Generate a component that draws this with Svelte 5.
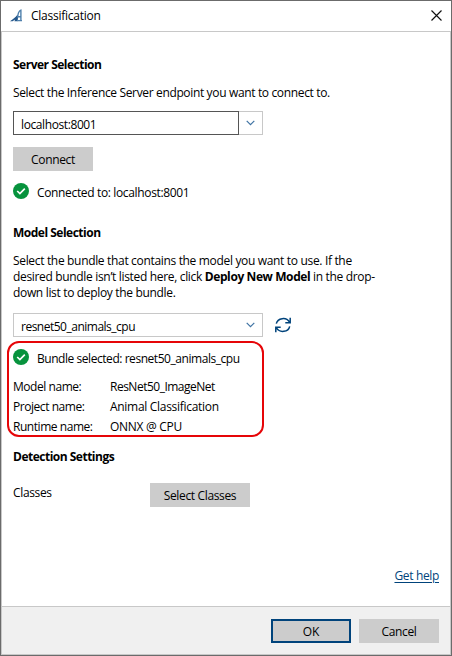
<script>
  let server = 'localhost:8001';
  let bundle = 'resnet50_animals_cpu';

  const details = [
    { label: 'Model name:', value: 'ResNet50_ImageNet' },
    { label: 'Project name:', value: 'Animal Classification' },
    { label: 'Runtime name:', value: 'ONNX @ CPU' }
  ];
</script>

{#snippet check()}
  <svg class="check" width="16" height="16" viewBox="0 0 16 16">
    <circle cx="8" cy="8" r="8" fill="#07933d" />
    <path d="M4.2 8 6.9 10.5 11.8 5.7" fill="none" stroke="#fff" stroke-width="1.7" />
  </svg>
{/snippet}

{#snippet chevron()}
  <svg width="9" height="6" viewBox="0 0 9 6">
    <path d="M.7 .8 4.5 4.6 8.3 .8" fill="none" stroke="#3f73a3" stroke-width="1.2" />
  </svg>
{/snippet}

<div class="window">
  <header>
    <svg class="logo" width="13" height="14" viewBox="0 0 13 14">
      <path d="M0 12.2C3 10.4 5.2 8.6 7.4 5.8L8.2 7 7.6 12.2H4.4L5.2 10.6 2.6 12.2Z" fill="#24578b" />
      <path d="M7.6 8.6C7.8 5 8.8 2 10.9 1.2V12.2M7.4 7.8H11.2M7.2 11.6H12" fill="none" stroke="#4f80ac" stroke-width="1.4" />
    </svg>
    <span class="title">Classification</span>
    <svg class="close" width="11" height="11" viewBox="0 0 11 11">
      <path d="M.5 .5 10.5 10.5M10.5 .5 .5 10.5" stroke="#111" stroke-width="1.15" />
    </svg>
  </header>

  <main>
    <h2>Server Selection</h2>
    <p class="intro">Select the Inference Server endpoint you want to connect to.</p>
    <div class="combo editable">
      <div class="value">{server}</div>
      <div class="arrow">{@render chevron()}</div>
    </div>
    <button class="connect">Connect</button>
    <div class="status">{@render check()}<span>Connected to: {server}</span></div>

    <h2 class="model">Model Selection</h2>
    <p class="help">
      Select the bundle that contains the model you want to use. If the<br />
      desired bundle isn’t listed here, click <b>Deploy New Model</b> in the drop-<br />
      down list to deploy the bundle.
    </p>
    <div class="picker">
      <div class="combo">
        <div class="value">{bundle}</div>
        <div class="arrow">{@render chevron()}</div>
      </div>
      <svg class="refresh" width="16" height="16" viewBox="0 0 16 16" fill="none" stroke="#00437b" stroke-width="1.5">
        <path d="M1.3 6.7A7 6.3 0 0 1 14.4 5M15.2 .8V5.7H10.3" />
        <path d="M14.7 9.3A7 6.3 0 0 1 1.6 11M.8 15.2V10.3H5.7" />
      </svg>
    </div>

    <section class="selected">
      <div class="status">{@render check()}<span class="bundle">Bundle selected: {bundle}</span></div>
      <dl>
        {#each details as row}
          <dt>{row.label}</dt>
          <dd class:wide={!row.value.includes('_')}>{row.value}</dd>
        {/each}
      </dl>
    </section>

    <h2 class="detection">Detection Settings</h2>
    <div class="classes">
      <span>Classes</span>
      <button>Select Classes</button>
    </div>
    <div class="link"><a href="#help">Get help</a></div>
  </main>

  <footer>
    <button class="ok">OK</button>
    <button>Cancel</button>
  </footer>
</div>

<style>
  :global(body) {
    background: #6b6b6b;
  }

  .window {
    box-sizing: border-box;
    width: 452px;
    height: 656px;
    display: flex;
    flex-direction: column;
    border: 1px solid #6b6b6b;
    background: #fff;
    color: #000;
    font: 12px/16px 'Open Sans', 'Noto Sans', sans-serif;
    letter-spacing: -0.35px;
    white-space: nowrap;
  }

  header {
    box-sizing: border-box;
    height: 31px;
    display: flex;
    align-items: center;
    padding: 0 9px 1px;
    border-bottom: 1px solid #c8c8c8;
  }

  .title {
    flex: 1;
    margin-left: 8px;
    letter-spacing: -0.25px;
  }

  main {
    flex: 1;
    box-sizing: border-box;
    padding: 25px 11px 0;
    border: solid #c8c8c8;
    border-width: 0 1px;
  }

  h2,
  p,
  dl,
  dd {
    margin: 0;
    font-size: 12px;
  }

  h2 {
    font-weight: 700;
    letter-spacing: -0.5px;
  }

  b {
    letter-spacing: -0.4px;
  }

  .intro {
    margin: 12px 0 10px;
  }

  .help {
    letter-spacing: -0.33px;
  }

  .combo {
    box-sizing: border-box;
    width: 250px;
    height: 24px;
    display: flex;
    border: 1px solid #c8c8c8;
  }

  .value {
    box-sizing: border-box;
    flex: 1;
    padding: 5px 7px 0;
    line-height: 15px;
    letter-spacing: -0.5px;
  }

  .arrow {
    width: 23px;
    display: flex;
    align-items: center;
    justify-content: center;
  }

  .editable .value {
    margin: -1px 0 -1px -1px;
    border: 1px solid #555;
    letter-spacing: -0.4px;
  }

  button {
    box-sizing: border-box;
    width: 80px;
    height: 24px;
    padding: 2px 0 0;
    border: 0;
    border-radius: 0;
    background: #ccc;
    color: #000;
    font: inherit;
    letter-spacing: inherit;
  }

  .connect {
    display: block;
    margin: 12px 0;
  }

  .status {
    height: 16px;
    display: flex;
    gap: 8px;
    line-height: 19px;
  }

  .bundle {
    letter-spacing: -0.45px;
  }

  .model {
    margin: 26px 0 12px;
  }

  .picker {
    display: flex;
    align-items: center;
    gap: 12px;
    margin-top: 12px;
  }

  .selected {
    box-sizing: border-box;
    width: 257px;
    height: 96px;
    margin: 4px 0 0 -6px;
    padding: 6px 4px 0;
    border: 2px solid #e60508;
    border-radius: 12px;
  }

  dl {
    display: grid;
    grid-template-columns: 97px 1fr;
    line-height: 20px;
    margin-top: 12px;
  }

  dt {
    letter-spacing: -0.45px;
  }

  dd {
    letter-spacing: -0.5px;
  }

  .wide {
    letter-spacing: -0.3px;
  }

  .detection {
    margin-top: 12px;
  }

  .classes {
    display: flex;
    margin-top: 18px;
  }

  .classes span {
    width: 137px;
    padding-top: 2px;
  }

  .classes button {
    width: 100px;
  }

  .link {
    margin-top: 61px;
    text-align: right;
  }

  a {
    color: #00437b;
    text-underline-offset: 2px;
  }

  footer {
    box-sizing: border-box;
    height: 49px;
    display: flex;
    justify-content: flex-end;
    gap: 8px;
    padding: 12px 11px 0;
    border: 1px solid #c8c8c8;
    background: #f0f0f0;
  }

  .ok {
    padding-top: 1px;
    border: 2px solid #00437b;
    letter-spacing: -0.2px;
  }
</style>
